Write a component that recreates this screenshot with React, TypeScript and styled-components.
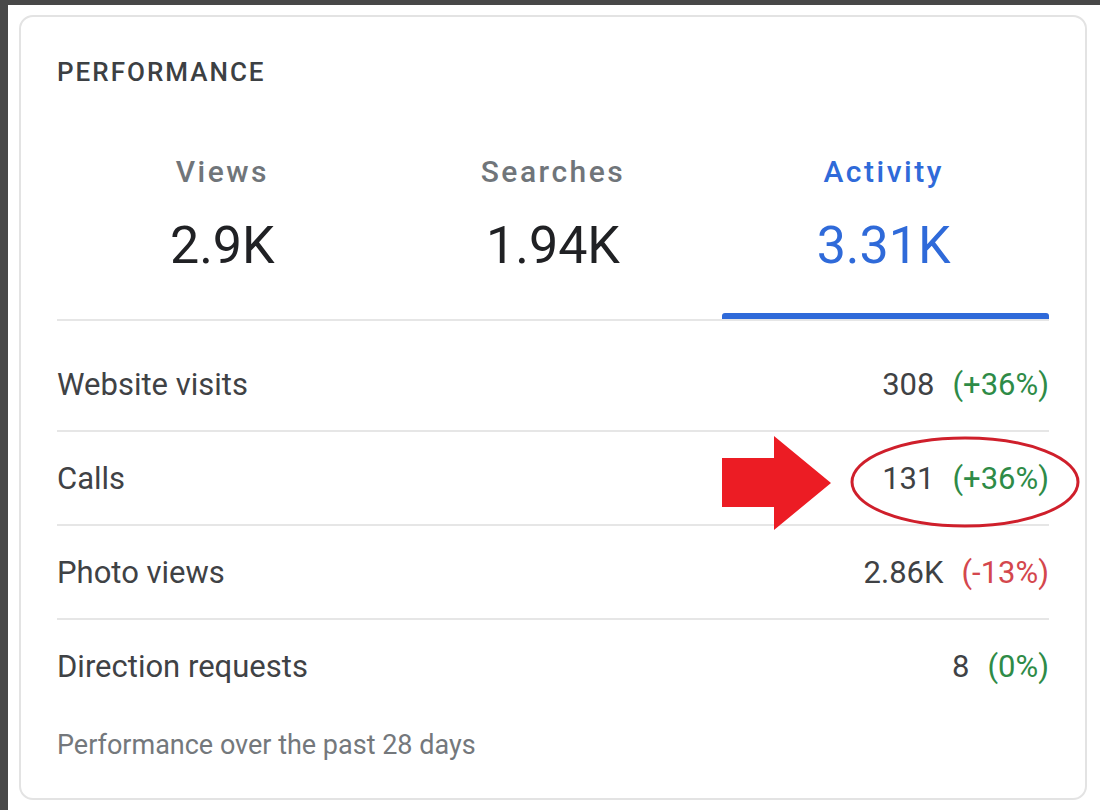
import styled, { createGlobalStyle } from "styled-components";

const GlobalStyle = createGlobalStyle`
  html, body {
    margin: 0;
    padding: 0;
    background: #ffffff;
  }
  body {
    font-family: Roboto, "Liberation Sans", Arial, sans-serif;
  }
`;

type Tone = "up" | "down" | "flat";

const TABS = [
  { label: "Views", value: "2.9K", active: false },
  { label: "Searches", value: "1.94K", active: false },
  { label: "Activity", value: "3.31K", active: true },
];

const ROWS: { label: string; value: string; change: string; tone: Tone }[] = [
  { label: "Website visits", value: "308", change: "(+36%)", tone: "up" },
  { label: "Calls", value: "131", change: "(+36%)", tone: "up" },
  { label: "Photo views", value: "2.86K", change: "(-13%)", tone: "down" },
  { label: "Direction requests", value: "8", change: "(0%)", tone: "flat" },
];

const App = () => {
  return (
    <Frame>
      <GlobalStyle />
      <Card>
        <Title>PERFORMANCE</Title>

        <TabStrip>
          {TABS.map((tab) => (
            <Tab key={tab.label}>
              <TabLabel $active={tab.active}>{tab.label}</TabLabel>
              <TabValue $active={tab.active}>{tab.value}</TabValue>
              <Indicator $active={tab.active} />
            </Tab>
          ))}
        </TabStrip>

        <MetricList>
          {ROWS.map((row) => (
            <MetricRow key={row.label}>
              <MetricLabel>{row.label}</MetricLabel>
              <MetricValue>
                {row.value}
                <Change $tone={row.tone}>{row.change}</Change>
              </MetricValue>
            </MetricRow>
          ))}
        </MetricList>

        <Footnote>Performance over the past 28 days</Footnote>

        <Callout width="400" height="110" viewBox="0 0 400 110">
          <polygon
            points="22,28 74,28 74,6 131,53 74,100 74,77 22,77"
            fill="#ec1c24"
          />
          <ellipse
            cx="265"
            cy="52"
            rx="113"
            ry="44"
            fill="none"
            stroke="#cf1f2b"
            strokeWidth="3"
          />
        </Callout>
      </Card>
    </Frame>
  );
};

export default App;

const Frame = styled.div`
  box-sizing: border-box;
  height: 810px;
  display: flex;
  flex-direction: column;
  border-top: 5px solid #484848;
  border-left: 8px solid #484848;
  padding: 10px 13px 10px 11px;
`;

const Card = styled.div`
  position: relative;
  flex: 1;
  display: flex;
  flex-direction: column;
  border: 2px solid #e3e3e3;
  border-radius: 14px;
  padding: 35px 36px 0 36px;
  background: #fff;
`;

const Title = styled.div`
  height: 40px;
  line-height: 40px;
  font-size: 26px;
  font-weight: 500;
  letter-spacing: 2px;
  color: #3c4043;
`;

const TabStrip = styled.div`
  display: grid;
  grid-template-columns: repeat(3, 1fr);
  margin-top: 60px;
  border-bottom: 2px solid #e6e6e6;
`;

const Tab = styled.div`
  display: flex;
  flex-direction: column;
  align-items: center;
`;

const TabLabel = styled.div<{ $active: boolean }>`
  height: 40px;
  line-height: 40px;
  font-size: 30px;
  font-weight: 500;
  letter-spacing: 2.5px;
  color: ${({ $active }) => ($active ? "#2f6ad9" : "#70757a")};
`;

const TabValue = styled.div<{ $active: boolean }>`
  margin-top: 24px;
  height: 60px;
  line-height: 60px;
  font-size: 52px;
  font-weight: 400;
  color: ${({ $active }) => ($active ? "#2f6ad9" : "#202124")};
`;

const Indicator = styled.div<{ $active: boolean }>`
  align-self: stretch;
  margin-top: 37px;
  margin-left: 4px;
  height: 6px;
  border-radius: 3px 3px 0 0;
  background: ${({ $active }) => ($active ? "#2f6ad9" : "transparent")};
`;

const MetricList = styled.div`
  margin-top: 17px;
  display: flex;
  flex-direction: column;
`;

const MetricRow = styled.div`
  display: flex;
  align-items: center;
  justify-content: space-between;
  height: 92px;

  & + & {
    border-top: 2px solid #e6e6e6;
  }
`;

const MetricLabel = styled.div`
  font-size: 31px;
  color: #3f4245;
`;

const MetricValue = styled.div`
  font-size: 31px;
  color: #3f4245;
`;

const Change = styled.span<{ $tone: Tone }>`
  margin-left: 18px;
  color: ${({ $tone }) => ($tone === "down" ? "#d4474d" : "#2e8b47")};
`;

const Footnote = styled.div`
  margin-top: 18px;
  height: 30px;
  line-height: 30px;
  font-size: 27px;
  color: #74787c;
`;

const Callout = styled.svg`
  position: absolute;
  left: 679px;
  top: 413px;
  pointer-events: none;
  overflow: visible;
`;
